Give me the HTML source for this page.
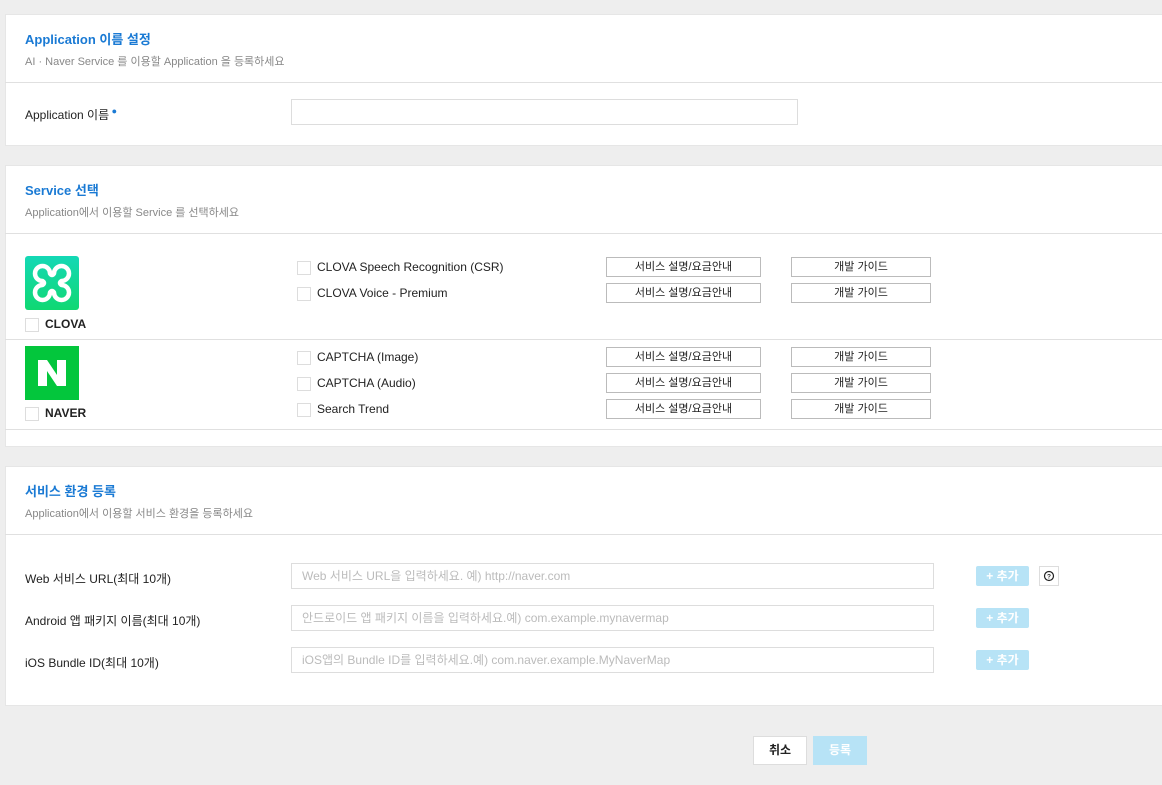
<!DOCTYPE html><html><head><meta charset="utf-8"><style>
body{margin:0;width:1162px;height:785px;background:#eeeeee;font-family:"Liberation Sans","Noto Sans CJK KR",sans-serif;position:relative;overflow:hidden;color:#222}
.a{position:absolute}
.p{position:absolute;left:5px;right:0;background:#fff;border:1px solid #e6e6e6;border-right:none}
.t{font-size:13px;font-weight:bold;color:#1a7ad4;white-space:nowrap}
.s{font-size:11px;color:#888;white-space:nowrap}
.hl{position:absolute;left:5px;right:0;height:1px;background:#e0e0e0}
.l{font-size:12px;color:#222;white-space:nowrap}
.cb{position:absolute;width:12px;height:12px;border:1px solid #ddd;background:#fff}
.b{position:absolute;height:18px;border:1px solid #bbb;background:#fff;font-size:11px;text-align:center;line-height:18px;white-space:nowrap}
.in{position:absolute;left:291px;width:643px;height:26px;border:1px solid #ddd;background:#fff;font-size:12px;color:#bbb;line-height:24px;padding-left:10px;box-sizing:border-box;white-space:nowrap}
.add{position:absolute;left:976px;width:53px;height:20px;background:#b7e3f6;border-radius:2px;color:#fff;font-size:12px;font-weight:bold;text-align:center;line-height:20px}
</style></head><body>
<div class="p" style="top:14px;height:130px"></div>
<div class="a t" style="left:25px;top:29px">Application 이름 설정</div>
<div class="a s" style="left:25px;top:53px">AI · Naver Service 를 이용할 Application 을 등록하세요</div>
<div class="hl" style="top:82px"></div>
<div class="a l" style="left:25px;top:106px">Application 이름<span style="color:#1a7ad4;font-size:9px;vertical-align:top"> ●</span></div>
<div class="a" style="left:291px;top:99px;width:505px;height:24px;border:1px solid #ddd"></div>

<div class="p" style="top:165px;height:280px"></div>
<div class="a t" style="left:25px;top:180px">Service 선택</div>
<div class="a s" style="left:25px;top:204px">Application에서 이용할 Service 를 선택하세요</div>
<div class="hl" style="top:233px"></div>
<div class="a" style="left:25px;top:256px;width:54px;height:54px;border-radius:3px;background:linear-gradient(#14d8b6,#10d872)"><svg width="54" height="54" viewBox="0 0 54 54"><path d="M17.5 25A7.5 7.5 0 1 1 25 17.5Q27 20.5 29 17.5A7.5 7.5 0 1 1 36.5 25Q33.5 27 36.5 29A7.5 7.5 0 1 1 29 36.5Q27 33.5 25 36.5A7.5 7.5 0 1 1 17.5 29Q20.5 27 17.5 25Z" fill="none" stroke="#fff" stroke-width="4.5" stroke-linejoin="round"/></svg></div>
<div class="cb" style="left:25px;top:318px"></div><div class="a l" style="left:45px;top:317px;font-weight:bold">CLOVA</div>
<div class="hl" style="top:339px"></div>
<div class="a" style="left:25px;top:346px;width:54px;height:54px;background:#03c63c"><svg width="54" height="54" viewBox="0 0 54 54"><polygon points="13,14 22,14 32,29 32,14 41,14 41,40 32,40 22,25 22,40 13,40" fill="#fff"/></svg></div>
<div class="cb" style="left:25px;top:407px"></div><div class="a l" style="left:45px;top:406px;font-weight:bold">NAVER</div>
<div class="hl" style="top:429px"></div>

<div class="cb" style="left:297px;top:261px"></div><div class="a l" style="left:317px;top:260px">CLOVA Speech Recognition (CSR)</div>
<div class="cb" style="left:297px;top:287px"></div><div class="a l" style="left:317px;top:286px">CLOVA Voice - Premium</div>
<div class="cb" style="left:297px;top:351px"></div><div class="a l" style="left:317px;top:350px">CAPTCHA (Image)</div>
<div class="cb" style="left:297px;top:377px"></div><div class="a l" style="left:317px;top:376px">CAPTCHA (Audio)</div>
<div class="cb" style="left:297px;top:403px"></div><div class="a l" style="left:317px;top:402px">Search Trend</div>
<div class="b" style="left:606px;top:257px;width:153px">서비스 설명/요금안내</div><div class="b" style="left:791px;top:257px;width:138px">개발 가이드</div>
<div class="b" style="left:606px;top:283px;width:153px">서비스 설명/요금안내</div><div class="b" style="left:791px;top:283px;width:138px">개발 가이드</div>
<div class="b" style="left:606px;top:347px;width:153px">서비스 설명/요금안내</div><div class="b" style="left:791px;top:347px;width:138px">개발 가이드</div>
<div class="b" style="left:606px;top:373px;width:153px">서비스 설명/요금안내</div><div class="b" style="left:791px;top:373px;width:138px">개발 가이드</div>
<div class="b" style="left:606px;top:399px;width:153px">서비스 설명/요금안내</div><div class="b" style="left:791px;top:399px;width:138px">개발 가이드</div>

<div class="p" style="top:466px;height:238px"></div>
<div class="a t" style="left:25px;top:481px">서비스 환경 등록</div>
<div class="a s" style="left:25px;top:505px">Application에서 이용할 서비스 환경을 등록하세요</div>
<div class="hl" style="top:534px"></div>
<div class="a l" style="left:25px;top:570px">Web 서비스 URL(최대 10개)</div>
<div class="in" style="top:563px">Web 서비스 URL을 입력하세요. 예) http://naver.com</div>
<div class="add" style="top:566px">+ 추가</div>
<div class="a" style="left:1039px;top:566px;width:20px;height:20px;border:1px solid #ddd;box-sizing:border-box;background:#fff"><svg width="18" height="18" viewBox="0 0 18 18"><circle cx="9" cy="9" r="4.5" fill="none" stroke="#222" stroke-width="1.2"/><text x="9" y="11.3" font-size="6.5" font-weight="bold" text-anchor="middle" font-family="Liberation Sans" fill="#222">?</text></svg></div>
<div class="a l" style="left:25px;top:612px">Android 앱 패키지 이름(최대 10개)</div>
<div class="in" style="top:605px">안드로이드 앱 패키지 이름을 입력하세요.예) com.example.mynavermap</div>
<div class="add" style="top:608px">+ 추가</div>
<div class="a l" style="left:25px;top:654px">iOS Bundle ID(최대 10개)</div>
<div class="in" style="top:647px">iOS앱의 Bundle ID를 입력하세요.예) com.naver.example.MyNaverMap</div>
<div class="add" style="top:650px">+ 추가</div>

<div class="a" style="left:753px;top:736px;width:54px;height:29px;background:#fff;border:1px solid #ddd;box-sizing:border-box;font-size:12px;font-weight:bold;text-align:center;line-height:27px">취소</div>
<div class="a" style="left:813px;top:736px;width:54px;height:29px;background:#b7e3f6;color:#fff;font-size:12px;font-weight:bold;text-align:center;line-height:29px">등록</div>
</body></html>
